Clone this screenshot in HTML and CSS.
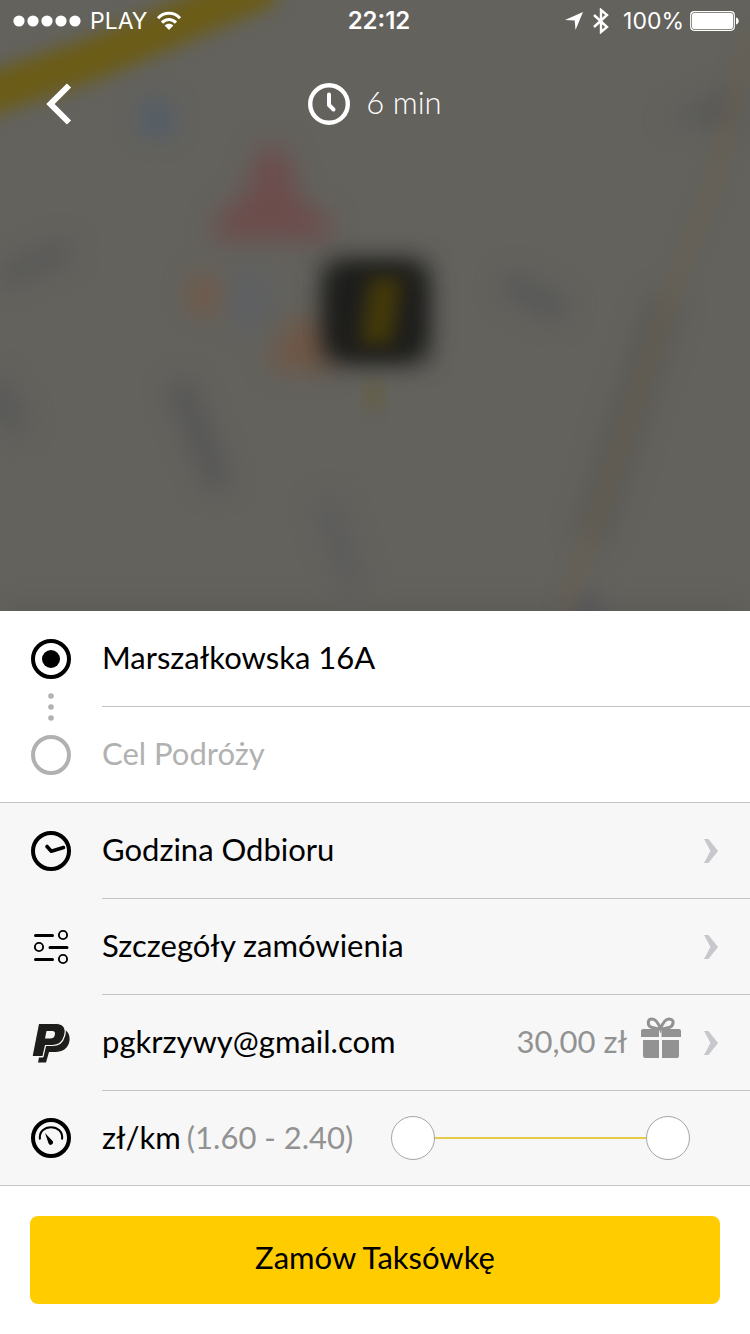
FILE: index.html
```html
<!DOCTYPE html>
<html lang="pl">
<head>
  <meta charset="UTF-8">
  <meta name="viewport" content="width=device-width, initial-scale=1">
  <title>Zamów Taksówkę</title>
  <link rel="stylesheet" href="styles.css">
</head>
<body>
  <header class="map">
    <svg class="map-bg" viewBox="0 0 750 611" preserveAspectRatio="xMidYMid slice" aria-hidden="true">
      <defs>
        <filter id="soft" x="-50%" y="-50%" width="200%" height="200%" color-interpolation-filters="sRGB"><feGaussianBlur stdDeviation="13"/></filter>
        <filter id="road" x="-50%" y="-50%" width="200%" height="200%" color-interpolation-filters="sRGB"><feGaussianBlur stdDeviation="9"/></filter>
      </defs>
      <rect width="750" height="611" fill="#63625d"/>
      <path d="M-40 104L90 60L270 -16" stroke="#6b5c17" stroke-width="42" fill="none" filter="url(#road)"/>
      <g filter="url(#soft)">
        <circle cx="157" cy="119" r="16" fill="#4c5c6e"/>
        <path d="M258 148h28l14 52 32 20-4 20H212l6-24 30-26z" fill="#6c4d4c"/>
        <ellipse cx="204" cy="295" rx="14" ry="20" fill="#755844"/>
        <ellipse cx="250" cy="300" rx="22" ry="32" fill="#5e6063"/>
        <path d="M268 362l22-42h45v50h-60z" fill="#6f5746"/>
        <path d="M0 278L70 248" stroke="#565656" stroke-width="18"/>
        <path d="M505 282l60 30" stroke="#575757" stroke-width="24"/>
        <path d="M178 382l42 105" stroke="#545455" stroke-width="22"/>
        <path d="M325 500l30 90" stroke="#5b5b5b" stroke-width="22"/>
        <path d="M-10 380l30 50" stroke="#575757" stroke-width="22"/>
        <path d="M665 120l75-40v50z" fill="#595957"/>
        <path d="M665 300L590 540" stroke="#595955" stroke-width="30"/>
        <circle cx="586" cy="612" r="16" fill="#50505a"/>
        <path d="M0 615H750" stroke="#555450" stroke-width="10"/>
      </g>
      <path d="M750 30L715 180L672 290L616 460L565 611" stroke="#695f4f" stroke-width="9" fill="none" filter="url(#road)"/>
      <ellipse cx="374" cy="395" rx="7" ry="16" fill="#675d3c" filter="url(#road)"/>
      <rect x="324" y="261" width="104" height="101" rx="12" fill="#1c1c1a" filter="url(#soft)"/>
      <rect x="334" y="271" width="84" height="81" rx="14" fill="#1e1e1c" filter="url(#soft)"/>
      <path d="M370 278h32l-10 66h-32z" fill="#43390a" filter="url(#road)"/>
    </svg>

    <div class="status">
      <div class="status-left">
        <svg width="68" height="12" viewBox="0 0 68 12" fill="#fff" aria-hidden="true">
          <circle cx="6" cy="6" r="5.6"/><circle cx="20" cy="6" r="5.6"/><circle cx="34" cy="6" r="5.6"/><circle cx="48" cy="6" r="5.6"/><circle cx="62" cy="6" r="5.6"/>
        </svg>
        <span>PLAY</span>
        <svg width="26" height="20" viewBox="0 0 26 20" fill="none" stroke="#fff" stroke-width="3" aria-hidden="true">
          <path d="M2 7.2C8 .7 18 .7 24 7.2M6 11.6c4-4.2 10-4.2 14 0"/>
          <path d="M13 19l-4.4-4.5c2.5-2.4 6.3-2.4 8.8 0z" fill="#fff" stroke="none"/>
        </svg>
      </div>
      <strong>22:12</strong>
      <div class="status-right">
        <svg width="18" height="18" viewBox="0 0 18 18" aria-hidden="true"><path d="M0 8L18 0l-7.500 18-.8-9.600z" fill="#fff"/></svg>
        <svg width="18" height="26" viewBox="0 0 16 26" fill="none" stroke="#fff" stroke-width="2.400" aria-hidden="true"><path d="M1 7l13 12-6 5V2l6 5L1 19"/></svg>
        <span class="percent">100%</span>
        <svg width="49" height="20" viewBox="0 0 49 20" aria-hidden="true">
          <rect x=".7" y=".7" width="43.600" height="18.600" rx="3.500" fill="none" stroke="#fff" stroke-width="1.200"/>
          <rect x="2" y="2" width="41" height="16" rx="2" fill="#fff"/>
          <path d="M46 6.500c3.600.6 3.600 6.400 0 7z" fill="#fff"/>
        </svg>
      </div>
    </div>

    <div class="topbar">
      <button class="back" type="button" aria-label="Wstecz">
        <svg width="26" height="42" viewBox="0 0 26 42" fill="none" stroke="#fff" stroke-width="6"><path d="M23 2.500L4.500 21L23 39.500"/></svg>
      </button>
      <div class="eta">
        <svg width="42" height="42" viewBox="0 0 42 42" fill="none" stroke="#fff" aria-hidden="true">
          <circle cx="21" cy="21" r="18.800" stroke-width="4.400"/>
          <path d="M21 11.500v10.500l4.500 4.500" stroke-width="4" stroke-linecap="round" stroke-linejoin="round"/>
        </svg>
        <span>6 min</span>
      </div>
    </div>
  </header>

  <form class="order">
    <section class="places">
      <div class="row">
        <label class="icon" for="pickup" aria-label="Skąd">
          <svg width="42" height="42" viewBox="0 0 42 42"><circle cx="21" cy="21" r="18" fill="none" stroke="#000" stroke-width="4"/><circle cx="21" cy="21" r="9" fill="#000"/></svg>
        </label>
        <div class="cell"><input id="pickup" type="text" value="Marszałkowska 16A"></div>
      </div>
      <svg class="dots" width="42" height="28" viewBox="0 0 42 28" fill="#b1b1b1" aria-hidden="true"><circle cx="21" cy="3" r="2.800"/><circle cx="21" cy="14" r="2.800"/><circle cx="21" cy="25" r="2.800"/></svg>
      <div class="row">
        <label class="icon" for="target" aria-label="Dokąd">
          <svg width="42" height="42" viewBox="0 0 42 42"><circle cx="21" cy="21" r="18" fill="none" stroke="#b1b1b1" stroke-width="4"/></svg>
        </label>
        <div class="cell"><input id="target" type="text" placeholder="Cel Podróży"></div>
      </div>
    </section>

    <section class="options">
      <button class="row" type="button">
        <span class="icon">
          <svg width="42" height="42" viewBox="0 0 42 42" fill="none" stroke="#000"><circle cx="21" cy="21" r="18" stroke-width="4"/><path d="M17 16.500l4.300 4.700 12.200-3.700" stroke-width="3.600" stroke-linecap="round" stroke-linejoin="round"/></svg>
        </span>
        <span class="cell"><span class="text">Godzina Odbioru</span>
          <svg class="chevron" width="14" height="24" viewBox="0 0 14 24"><path d="M0 0h4.500L14 12 4.500 24H0l6.500-12z"/></svg>
        </span>
      </button>
      <button class="row" type="button">
        <span class="icon">
          <svg width="42" height="42" viewBox="0 0 42 42" fill="none" stroke="#000">
            <path d="M5.500 9.500h17M20 21.500h17M5.500 33.500h17" stroke-width="3" stroke-linecap="round"/>
            <g stroke-width="1.900"><circle cx="33" cy="9" r="4.100"/><circle cx="9" cy="21" r="4.100"/><circle cx="33" cy="33" r="4.100"/></g>
          </svg>
        </span>
        <span class="cell"><span class="text">Szczegóły zamówienia</span>
          <svg class="chevron" width="14" height="24" viewBox="0 0 14 24"><path d="M0 0h4.500L14 12 4.500 24H0l6.500-12z"/></svg>
        </span>
      </button>
      <button class="row" type="button">
        <span class="icon">
          <svg width="42" height="42" viewBox="0 0 42 42" fill="#1d1d1b">
            <path d="M35 8c8 4 6 22-9 22h-7l-3 10.500H8l1-5h4l3-13h8c7 0 12-7 11-14.500z"/>
            <path d="M8.500 1.500h18c8 0 10 6 8 12.500-2 7-6 9.500-12 9.500h-7l-2.500 11H2z" stroke="#f7f7f7" stroke-width="1.200"/>
            <path d="M16.500 9h5c3 0 4 1 3.300 4-.6 2.600-2 3.500-4.800 3.500h-5z" fill="#f7f7f7"/>
          </svg>
        </span>
        <span class="cell"><span class="text">pgkrzywy@gmail.com</span>
          <span class="text voucher">30,00 zł</span>
          <svg class="gift" width="40" height="41" viewBox="0 0 40 41" fill="#929292">
            <path d="M2 12h16v8H0v-6q0-2 2-2zM20.500 12H38q2 0 2 2v6H20.500zM2 23h16v18H4q-2 0-2-2zM21 23h17v16q0 2-2 2H21z"/>
            <path d="M19.500 12C17 5 14 2 11 2c-5 0-5 7 0 8.500 2.500 1 5.500 1 8.500 1.500 3-.5 6-.5 8.500-1.500 5-1.500 6-8.500 0-8.500-3 0-6 3-8.500 10z" fill="none" stroke="#929292" stroke-width="3"/>
          </svg>
          <svg class="chevron" width="14" height="24" viewBox="0 0 14 24"><path d="M0 0h4.500L14 12 4.500 24H0l6.500-12z"/></svg>
        </span>
      </button>
      <div class="row">
        <span class="icon">
          <svg width="42" height="42" viewBox="0 0 42 42" fill="none" stroke="#000">
            <circle cx="21" cy="21" r="18" stroke-width="4"/>
            <path d="M10 22.500C7.500 6 34.500 6 32 22.500" stroke-width="2"/>
            <path d="M15 16l3.600 10.500a2.300 2.300 0 0 0 4.200-2.200z" fill="#000" stroke="none"/>
          </svg>
        </span>
        <div class="cell">
          <span class="text">zł/km</span>
          <span class="text rate" id="rate">(1.60 - 2.40)</span>
          <div class="range">
            <input type="range" min="1.6" max="2.4" step="0.1" value="1.6" aria-label="Stawka minimalna" aria-describedby="rate">
            <input type="range" min="1.6" max="2.4" step="0.1" value="2.4" aria-label="Stawka maksymalna" aria-describedby="rate">
          </div>
        </div>
      </div>
    </section>

    <div class="submit">
      <button class="order-btn" type="submit">Zamów Taksówkę</button>
    </div>
  </form>
</body>
</html>
```

FILE: styles.css
```css
* { box-sizing: border-box; }
body { margin: 0; min-height: 100vh; display: flex; flex-direction: column; background: #fff; color: #000; font-family: Lato, "Noto Sans", sans-serif; font-size: 31px; }
button, input { font: inherit; color: inherit; border: 0; background: none; padding: 0; }
button { cursor: pointer; }
svg { display: block; flex: none; }

/* map */
.map { position: relative; flex: 1; color: #fff; background: #63625d; }
.map-bg { position: absolute; width: 100%; height: 100%; }
.status { position: relative; display: grid; grid-template-columns: 1fr auto 1fr; align-items: center; height: 41px; padding: 0 11px 0 13px; font-family: Inter, sans-serif; font-size: 23px; }
.status strong { padding-left: 6px; font-size: 24px; font-weight: 600; }
.status-left, .status-right { display: flex; align-items: center; gap: 9px; }
.status-right { justify-content: flex-end; }
.percent { margin: 0 -3px 0 4px; }
.topbar { position: relative; display: grid; grid-template-columns: 1fr auto 1fr; align-items: center; height: 126px; padding: 0 46px; }
.back { justify-self: start; }
.eta { display: flex; align-items: center; gap: 16px; }
.eta span { padding-bottom: 4px; font-weight: 300; }

/* list */
.row { display: flex; align-items: stretch; width: 100%; height: 96px; padding-left: 30px; text-align: left; }
.icon { display: flex; align-items: center; width: 72px; flex: none; }
.cell { flex: 1; display: flex; align-items: center; min-width: 0; padding-right: 32px; border-bottom: 1px solid #c4c4c4; }
.places { position: relative; }
.options { background: #f7f7f7; border-bottom: 1px solid #c4c4c4; }
.places { border-bottom: 1px solid #c4c4c4; }
.row:last-child { height: 95px; }
.options .row:last-child { height: 94px; }
.row:last-child .cell { border-bottom: 0; }
.text, .cell input[type=text] { padding-bottom: 3px; }
.cell input[type=text] { width: 100%; outline: 0; }
.cell input::placeholder { color: #b1b1b1; opacity: 1; }
.dots { position: absolute; left: 30px; top: 82px; }
.chevron { margin-left: auto; fill: #c7c7cc; }
.voucher { margin-left: auto; color: #929292; }
.gift { margin: 0 23px 10px 14px; }
.gift + .chevron { margin-left: 0; }
.rate { margin-left: 6px; color: #929292; }

/* two sliders share one track */
.range { display: grid; align-items: center; flex: 0 1 299px; margin: 0 28px 0 auto; background: linear-gradient(#e6cb4b, #e6cb4b) center / 90% 2px no-repeat; }
.range input { grid-area: 1 / 1; width: 100%; height: 44px; margin: 0; appearance: none; pointer-events: none; }
.range input::-webkit-slider-thumb { appearance: none; width: 44px; height: 44px; border: 1px solid #a5a5a5; border-radius: 50%; background: #fff; pointer-events: auto; cursor: pointer; }
.range input::-moz-range-thumb { width: 44px; height: 44px; border: 1px solid #a5a5a5; border-radius: 50%; background: #fff; pointer-events: auto; }

.submit { padding: 30px; }
.order-btn { width: 100%; height: 88px; padding-bottom: 6px; border-radius: 8px; background: #ffcc00; }
```
